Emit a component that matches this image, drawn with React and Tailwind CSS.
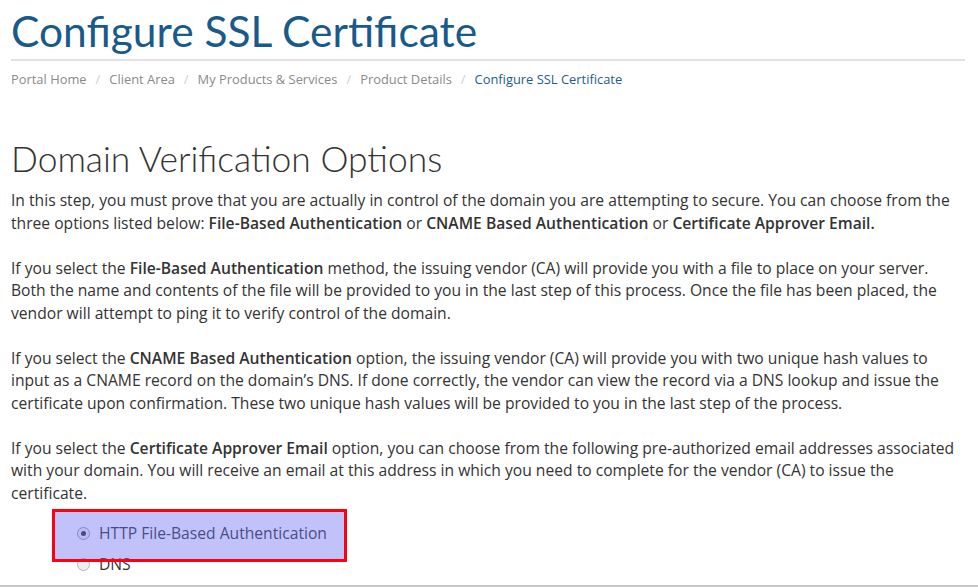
export default function App() {
  const crumbs = ['Portal Home', 'Client Area', 'My Products & Services', 'Product Details']

  return (
    <div className="w-[978px] h-[587px] overflow-hidden bg-white relative" style={{ fontFamily: '"Open Sans", sans-serif' }}>
      <div className="pl-[11px] pr-[13px]">
        {/* HEADER */}
        <h1 className="text-[42.5px] leading-[52px] pt-[5px] text-[#195a8c] font-normal" style={{ fontFamily: 'Lato, "Open Sans", sans-serif' }}>
          Configure SSL Certificate
        </h1>
        <div className="h-[2px] bg-[#e2e2e2] mt-[2px]" />

        {/* BREADCRUMB */}
        <div className="flex items-center text-[12.9px] leading-[20px] mt-[8px] text-[#8a8a8a]">
          {crumbs.map((c) => (
            <span key={c} className="flex items-center">
              <span>{c}</span>
              <span className="text-[#cfcfcf] px-[9px]">/</span>
            </span>
          ))}
          <span className="text-[#1d5d8c]">Configure SSL Certificate</span>
        </div>

        {/* CONTENT */}
        <h2 className="text-[35.4px] leading-[44px] mt-[48px] font-light text-[#333]" style={{ fontFamily: 'Lato, "Open Sans", sans-serif' }}>
          Domain Verification Options
        </h2>

        <div className="text-[15.65px] leading-[22.5px] text-[#333] mt-[8px]">
          <p>
            In this step, you must prove that you are actually in control of the domain you are attempting to secure. You can choose from the three options listed below: <b className="font-semibold">File-Based Authentication</b> or <b className="font-semibold">CNAME Based Authentication</b> or <b className="font-semibold">Certificate Approver Email.</b>
          </p>
          <p className="mt-[22.5px]">
            If you select the <b className="font-semibold">File-Based Authentication</b> method, the issuing vendor (CA) will provide you with a file to place on your server. Both the name and contents of the file will be provided to you in the last step of this process. Once the file has been placed, the vendor will attempt to ping it to verify control of the domain.
          </p>
          <p className="mt-[22.5px]">
            If you select the <b className="font-semibold">CNAME Based Authentication</b> option, the issuing vendor (CA) will provide you with two unique hash values to input as a CNAME record on the domain’s DNS. If done correctly, the vendor can view the record via a DNS lookup and issue the certificate upon confirmation. These two unique hash values will be provided to you in the last step of the process.
          </p>
          <p className="mt-[22.5px]">
            If you select the <b className="font-semibold">Certificate Approver Email</b> option, you can choose from the following pre-authorized email addresses associated with your domain. You will receive an email at this address in which you need to complete for the vendor (CA) to issue the certificate.
          </p>

          {/* OPTIONS */}
          <div className="ml-[66px] mt-[14px]">
            <label className="flex items-center gap-[9px] h-[31px]">
              <span className="w-[13px] h-[13px] rounded-full border border-[#9a9a9a] bg-[#f4f4f4] flex items-center justify-center">
                <span className="w-[5px] h-[5px] rounded-full bg-[#333]" />
              </span>
              <span>HTTP File-Based Authentication</span>
            </label>
            <label className="flex items-center gap-[9px] h-[31px]">
              <span className="w-[13px] h-[13px] rounded-full border border-[#b5b5b5] bg-[#eee]" />
              <span>DNS</span>
            </label>
          </div>
        </div>
      </div>

      {/* highlight box */}
      <div className="absolute left-[52px] top-[509px] w-[295px] h-[53px] border-[3px] border-[#ff0010] bg-[rgba(110,110,245,0.42)]" />

      <div className="absolute left-0 right-0 bottom-0 h-[2px] bg-[#c8c8c8]" />
    </div>
  )
}
